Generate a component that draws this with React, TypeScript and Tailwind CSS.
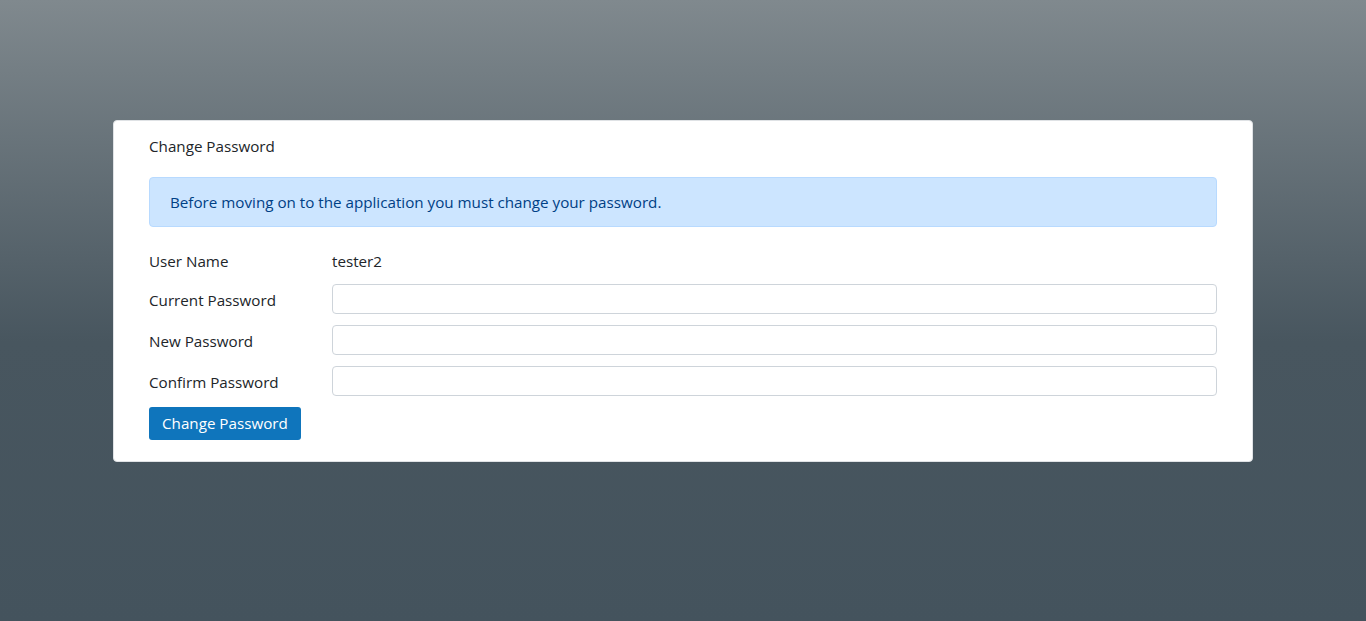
export default function App() {
  const fields = ['Current Password', 'New Password', 'Confirm Password'];

  return (
    <div
      className="h-[621px] w-full bg-gradient-to-b from-[#80898e] via-[#48565f] via-55% to-[#44535d] pt-[120px] text-[15.2px] text-[#212529]"
      style={{ fontFamily: '"Segoe UI", "Open Sans", "Noto Sans", sans-serif' }}
    >
      <div className="mx-[113px] rounded-[4px] border border-[#dfe2e5] bg-white px-[35px] pt-[13px] pb-[21px]">
        <div className="h-[24px] leading-[24px]">Change Password</div>

        <div className="mt-[19px] flex h-[50px] items-center rounded-[4px] border border-[#b8daff] bg-[#cce5ff] px-[20px] text-[#004085]">
          Before moving on to the application you must change your password.
        </div>

        <div className="mt-[22px] flex h-[24px] items-center">
          <div className="w-[183px]">User Name</div>
          <div>tester2</div>
        </div>

        {fields.map((label) => (
          <div key={label} className="mt-[11px] flex h-[30px] items-center">
            <label className="w-[183px] shrink-0 pt-[3px]">{label}</label>
            <input
              type="password"
              className="h-[30px] flex-1 rounded-[4px] border border-[#ced4da] bg-white px-3 outline-none"
            />
          </div>
        ))}

        <button className="mt-[11px] h-[33px] rounded-[3px] bg-[#0f75bc] px-[13px] text-white">
          Change Password
        </button>
      </div>
    </div>
  );
}
